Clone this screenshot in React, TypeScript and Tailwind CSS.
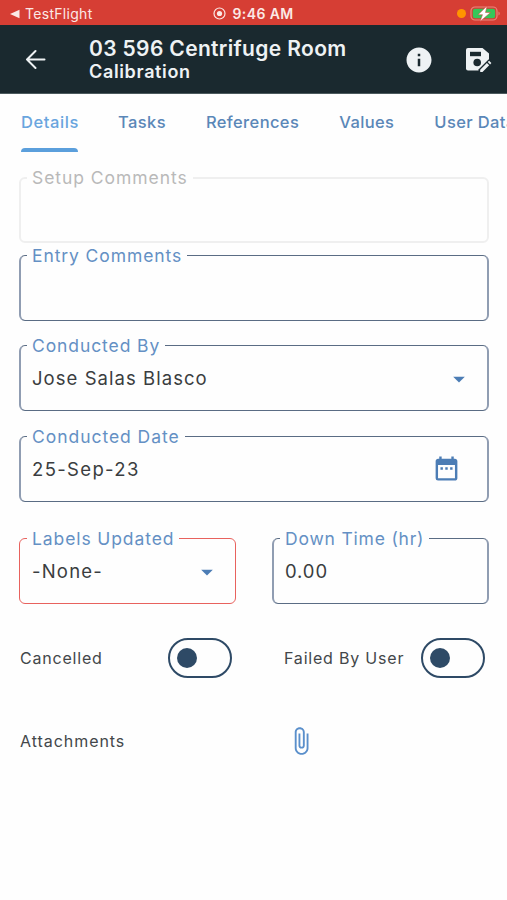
import React from 'react';
import { MdArrowDropDown, MdAttachFile, MdDateRange, MdInfo } from 'react-icons/md';

interface FieldProps {
  label: string;
  value?: string;
  tone?: 'normal' | 'disabled' | 'error';
  labelClass: string;
  valueClass?: string;
  className?: string;
  children?: React.ReactNode;
}

const borderTones = {
  normal: 'border-x-2 border-y border-x-[#909db2] border-y-[#5a6c84]',
  disabled: 'border-2 border-[#efefef]',
  error: 'border border-[#e8625e]',
};

// Outlined input, the legend cuts the top border
const Field: React.FC<FieldProps> = ({ label, value, tone = 'normal', labelClass, valueClass = '', className = '', children }) => (
  <fieldset className={`h-[76px] min-w-0 rounded-md ${borderTones[tone]} ${className}`}>
    <legend
      className={`h-[21px] px-[5px] text-[17.5px] leading-[21px] whitespace-nowrap ${labelClass} ${
        tone === 'error' ? 'ml-[7px]' : 'ml-[6px]'
      } ${tone === 'disabled' ? 'text-[#b9b9b9]' : 'text-[#6490c4]'}`}
    >
      {label}
    </legend>
    <div className={`flex h-[46px] items-center justify-between ${tone === 'error' ? 'pl-[12px]' : 'pl-[11px]'}`}>
      <span className={`text-[18.5px] whitespace-nowrap text-[#3a3d40] ${valueClass}`}>{value}</span>
      {children}
    </div>
  </fieldset>
);

const Toggle = () => (
  <button className="flex h-[40px] w-[64px] items-center rounded-full border-[2.5px] border-[#2e4a66] pl-[7px]">
    <span className="size-5 rounded-full bg-[#2e4a66]" />
  </button>
);

const StatusBar = () => (
  <div className="grid h-[25px] grid-cols-3 items-center bg-[#d63e34] pt-[2px] text-[14px] leading-none text-[#fbe9e6]">
    <div className="flex items-center gap-[5px] pl-[10px]">
      <svg width="10" height="10" viewBox="0 0 10 10" fill="currentColor">
        <path d="M0 5 9.5 0.7v8.6z" />
      </svg>
      <span className="tracking-[0.3px]">TestFlight</span>
    </div>
    <div className="flex items-center justify-center gap-[6px]">
      <svg width="13" height="13" viewBox="0 0 13 13">
        <circle cx="6.5" cy="6.5" r="5.5" fill="none" stroke="currentColor" strokeWidth="1.2" />
        <circle cx="6.5" cy="6.5" r="2.6" fill="currentColor" />
      </svg>
      <span className="font-semibold tracking-[0.4px]">9:46 AM</span>
    </div>
    <div className="flex items-center justify-end gap-[4px] pr-[6px]">
      <span className="size-[9px] rounded-full bg-[#ff9500]" />
      <svg width="31" height="16" viewBox="0 0 31 16">
        <rect x="1" y="1" width="26" height="13" rx="4" fill="none" stroke="#e8877e" strokeWidth="1.2" />
        <rect x="2.8" y="2.7" width="22.4" height="9.6" rx="2.2" fill="#35c759" />
        <path d="M28.5 5.500v4c1.600-.6 1.600-3.400 0-4z" fill="#e8877e" />
        <path d="M17 0 8 8.700h4.500L10 15.500 20.500 6.500h-5z" fill="#fff" stroke="#d63e34" strokeWidth="0.5" />
      </svg>
    </div>
  </div>
);

const Header = () => (
  <header className="flex h-[69px] items-center border-b border-[#4c5a5e] bg-[#1a292f] text-[#eef2f4]">
    <button className="ml-[25px]">
      <svg width="21" height="20" viewBox="0 0 21 20" fill="none" stroke="currentColor" strokeWidth="2" strokeLinecap="round" strokeLinejoin="round">
        <path d="M19.5 10.5H2M10.5 2 2 10.5l8.5 8.5" />
      </svg>
    </button>
    <div className="ml-[43px] flex-1 font-semibold whitespace-nowrap">
      <h1 className="text-[21px] leading-[24px] tracking-[0.35px]">03 596 Centrifuge Room</h1>
      <h2 className="text-[18px] leading-[21px] tracking-[0.65px]">Calibration</h2>
    </div>
    <MdInfo size={30} className="mt-px" />
    <button className="mr-[15px] ml-[31px]">
      <svg width="27" height="27" viewBox="0 0 27 27">
        <path d="M3 2h14.5L24 7.5V23a1.5 1.5 0 0 1-1.5 1.5H3a2 2 0 0 1-2-2V4a2 2 0 0 1 2-2z" fill="currentColor" />
        <path d="M5 5.8h11v4.4H5z" fill="#1a292f" />
        <circle cx="12.2" cy="16.5" r="3.8" fill="#1a292f" />
        <path d="M13.5 27v-3.5L23.5 13.5H27V27z" fill="#1a292f" />
        <path d="M15.2 26v-2.3l6.7-6.7 2.3 2.3-6.700 6.700zM22.800 16.100l1.300-1.300 2.300 2.300-1.300 1.300z" fill="currentColor" />
      </svg>
    </button>
  </header>
);

const tabs = ['Details', 'Tasks', 'References', 'Values', 'User Data'];

const Tabs = () => (
  <nav className="flex h-[58px] gap-[40px] overflow-hidden pl-[21px] text-[16.5px] font-medium whitespace-nowrap">
    {tabs.map((tab, i) => (
      <div
        key={tab}
        className={`flex flex-col justify-between pt-4 leading-6 ${
          i === 0 ? '-mr-px tracking-[0.6px] text-[#69a5de]' : 'tracking-[0.38px] text-[#5a87b8]'
        }`}
      >
        {tab}
        {i === 0 && <span className="mr-px h-[4px] rounded-t-full bg-[#5b9fdc]" />}
      </div>
    ))}
  </nav>
);

export default function App() {
  return (
    <div className="h-[900px] w-[507px] overflow-hidden bg-[#fefefe] font-['Inter',sans-serif]">
      <StatusBar />
      <Header />
      <Tabs />
      <main className="flex flex-col pt-[15px] pr-[18px] pl-[19px]">
        <Field label="Setup Comments" tone="disabled" labelClass="tracking-[0.95px]" />
        <Field label="Entry Comments" labelClass="tracking-[0.9px]" className="mt-[2px]" />
        <Field label="Conducted By" value="Jose Salas Blasco" labelClass="tracking-[0.9px]" valueClass="tracking-[1.05px]" className="mt-[14px]">
          <MdArrowDropDown size={28} className="mr-[14px] text-[#4c7db5]" />
        </Field>
        <Field label="Conducted Date" value="25-Sep-23" labelClass="tracking-[0.95px]" valueClass="tracking-[1.35px]" className="mt-[15px]">
          <MdDateRange size={29} className="mr-[26px] mb-[3px] text-[#4c7db5]" />
        </Field>
        <div className="mt-[26px] grid grid-cols-2 gap-9">
          <Field label="Labels Updated" value="-None-" tone="error" labelClass="tracking-[0.9px]" valueClass="tracking-[1.2px]">
            <MdArrowDropDown size={28} className="mr-[14px] text-[#4c7db5]" />
          </Field>
          <Field label="Down Time (hr)" value="0.00" labelClass="tracking-[0.8px]" valueClass="tracking-[0.9px]" />
        </div>
        <div className="mt-[34px] grid grid-cols-2 gap-9 text-[16px] tracking-[0.8px] text-[#43474a]">
          <div className="flex items-center justify-between pr-[4px] pl-px">
            <span>Cancelled</span>
            <Toggle />
          </div>
          <div className="flex items-center justify-between pr-[4px] pl-[12px]">
            <span>Failed By User</span>
            <Toggle />
          </div>
        </div>
        <div className="mt-[48px] grid grid-cols-2 items-center gap-9 text-[16px] tracking-[0.95px] text-[#43474a]">
          <span className="pl-px">Attachments</span>
          <MdAttachFile size={30} className="ml-[14px] text-[#5a8fcb]" />
        </div>
      </main>
    </div>
  );
}
